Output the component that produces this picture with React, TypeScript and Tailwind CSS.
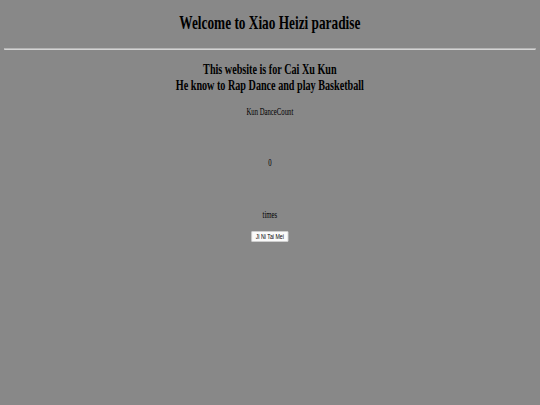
import React, { useState } from "react";

export default function App() {
  const [count, setCount] = useState(0);

  return (
    <div className="w-full h-[405px] bg-[#888888] overflow-hidden">
      {/* the reference is a horizontally squeezed page, so draw it wide and squeeze it */}
      <div className="w-[771px] px-[6px] origin-top-left scale-x-[0.7] text-black font-['Liberation_Serif','Times_New_Roman',serif] text-center">
        <h1 className="mt-[12px] text-[19px] leading-[22px] font-bold">
          Welcome to Xiao Heizi paradise
        </h1>
        <div className="mt-[14px] h-[2px] border-t border-[#b4b4b4] bg-[#d4d4d4]" />
        <h2 className="mt-[11px] text-[14.5px] leading-[16px] font-bold">
          This website is for Cai Xu Kun
          <br />
          He know to Rap Dance and play Basketball
        </h2>
        <p className="mt-[13px] text-[9.6px] leading-[11px]">Kun DanceCount</p>
        <p className="mt-[40px] text-[9.6px] leading-[11px]">{count}</p>
        <p className="mt-[41px] text-[9.6px] leading-[11px]">times</p>
        <div className="mt-[11px] flex justify-center">
          <button
            onClick={() => setCount(count + 1)}
            className="h-[11px] px-[5px] bg-[#fafafa] border border-[#cfcfcf] rounded-[1px] text-[7.5px] leading-[9px] font-['Liberation_Sans',Arial,sans-serif]"
          >
            Ji Ni Tai Mei
          </button>
        </div>
      </div>
    </div>
  );
}
